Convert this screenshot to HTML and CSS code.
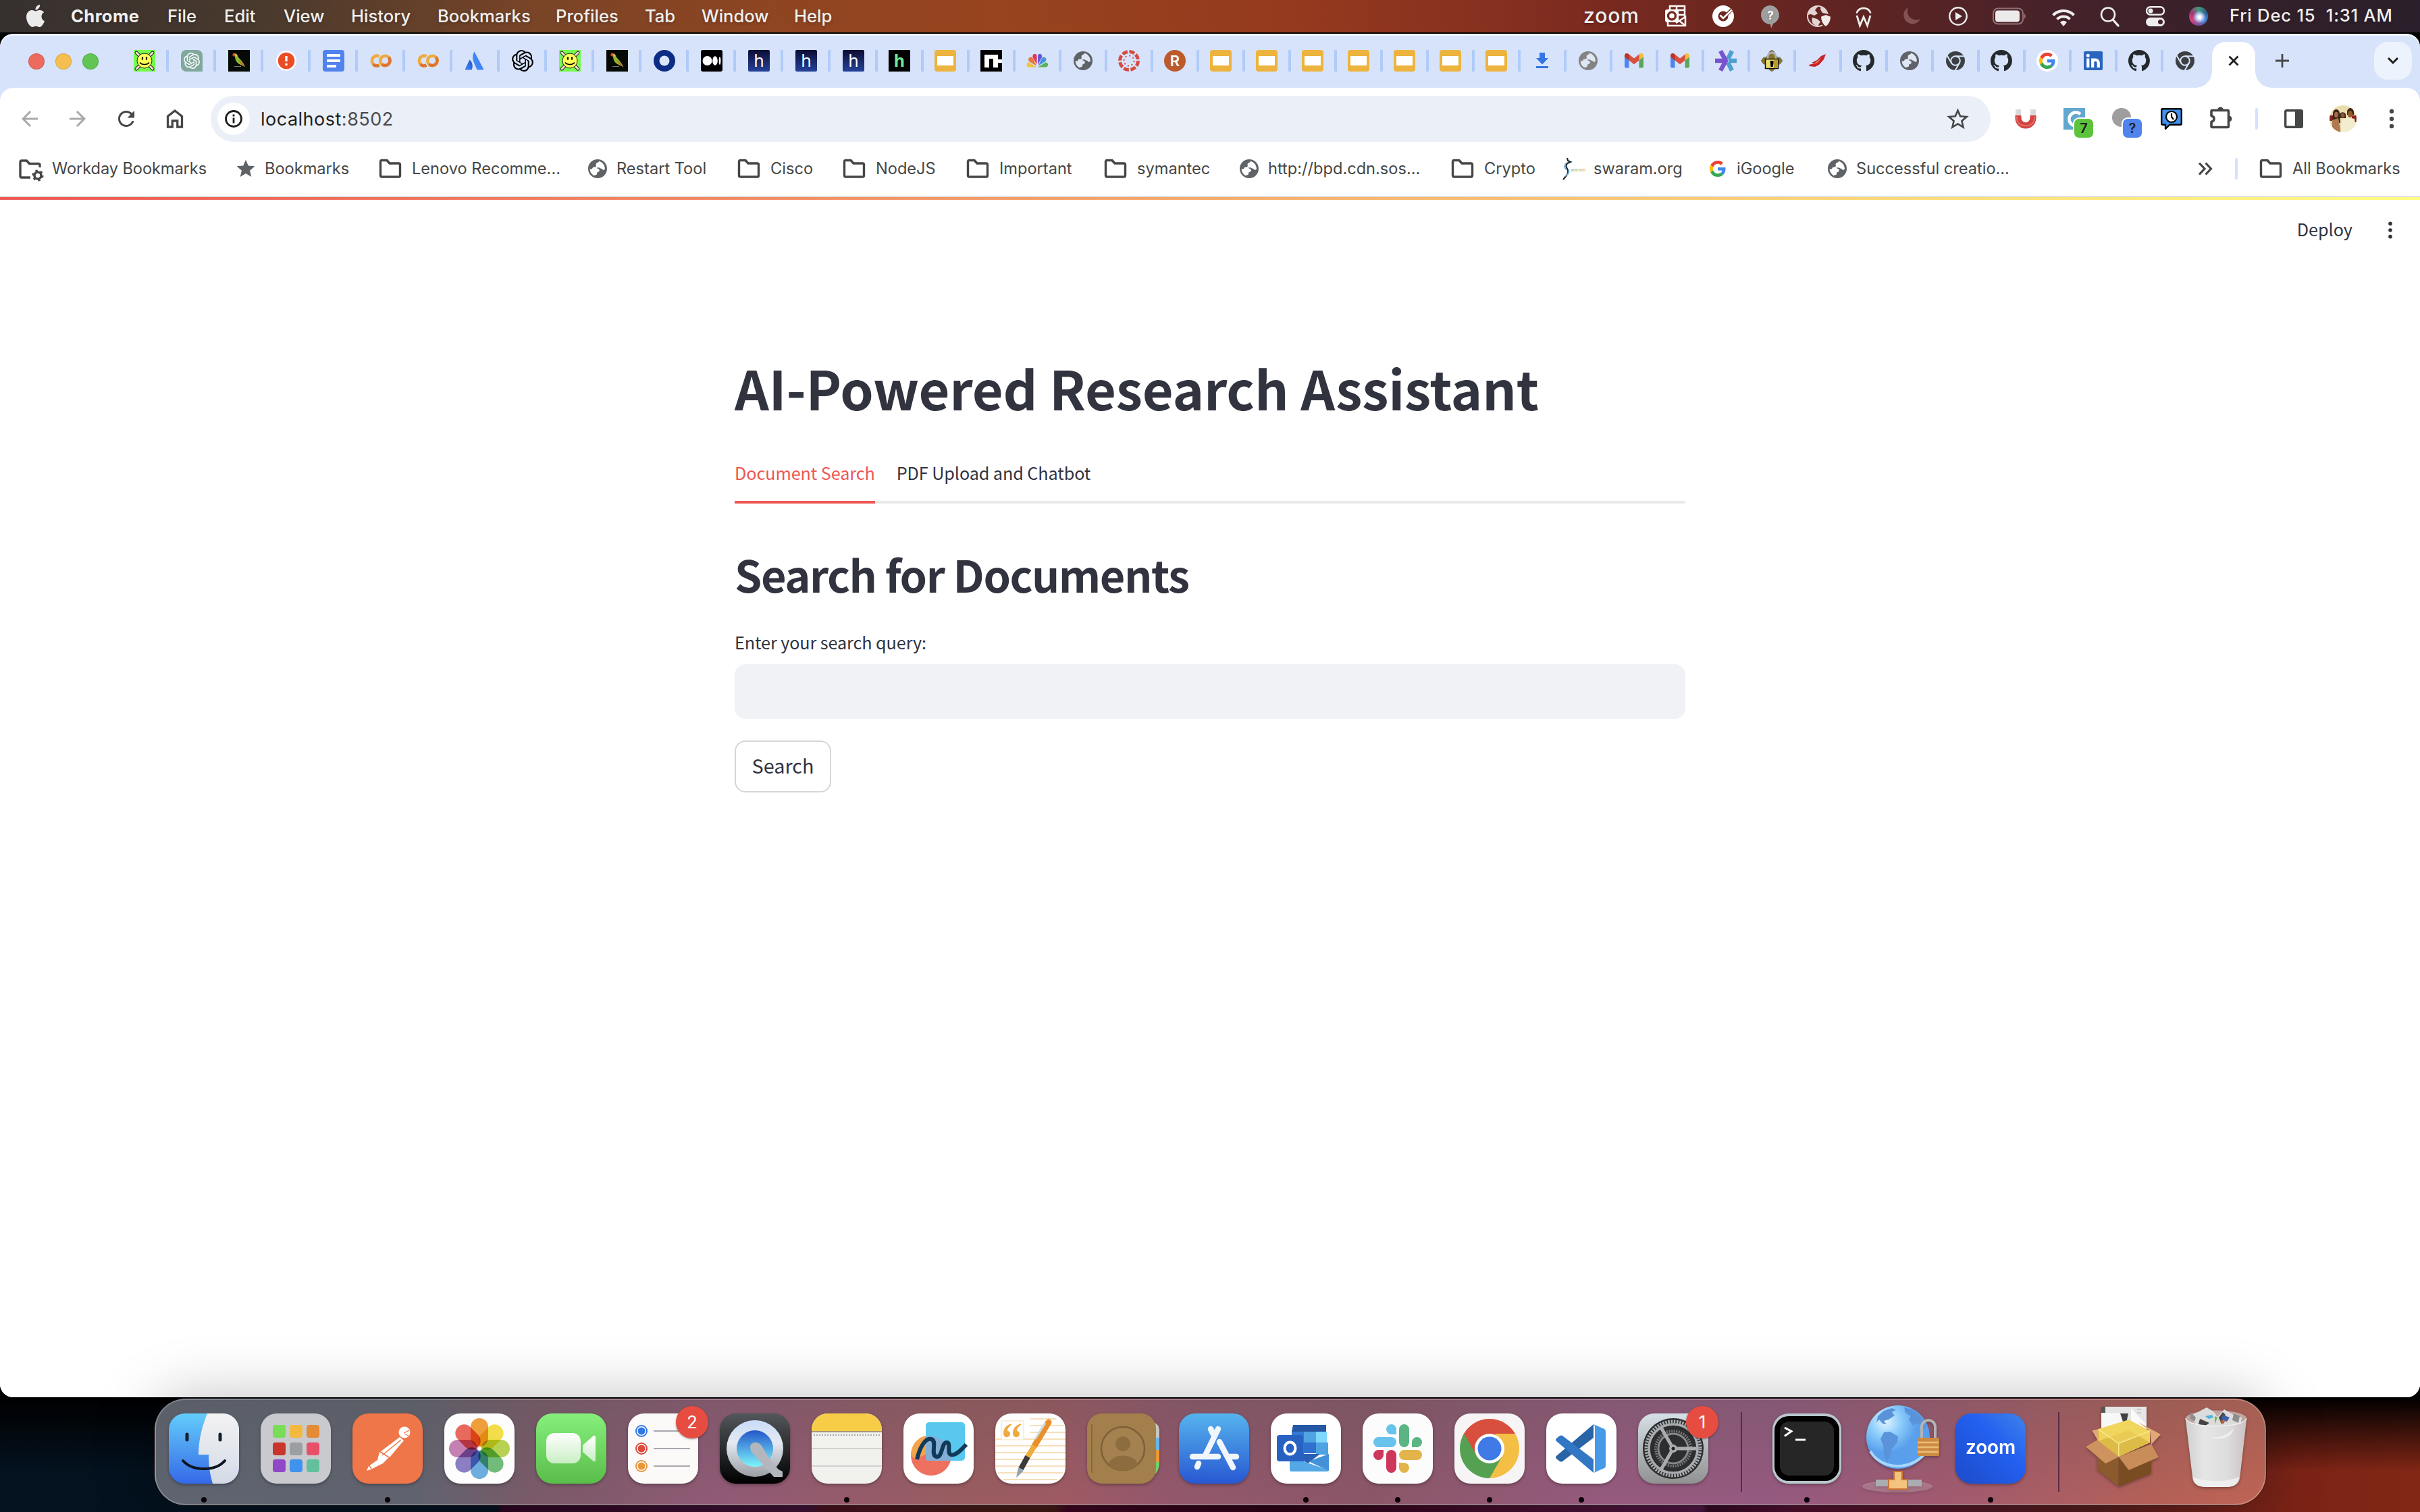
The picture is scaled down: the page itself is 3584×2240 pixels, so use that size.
FILE: index.html
```html
<!DOCTYPE html>
<html lang="en">
<head>
<meta charset="utf-8">
<title>AI-Powered Research Assistant</title>
<link rel="stylesheet" href="styles.css">
</head>
<body>
<svg class="sprite" aria-hidden="true">
  <defs>
    <linearGradient id="g-navy" x1="0" y1="0" x2="0" y2="1"><stop offset="0" stop-color="#0b0d33"/><stop offset="1" stop-color="#25429a"/></linearGradient>
    <linearGradient id="g-atl" x1="1" y1="0" x2="0" y2="1"><stop offset="0" stop-color="#1d57c9"/><stop offset="1" stop-color="#3f86f7"/></linearGradient>
  </defs>
  <symbol id="smiley" viewBox="0 0 32 32"><path fill="#74fb4c" d="M0 0h32v32H0z"/><path d="M4 4l24 24M28 4L4 28" stroke="#222" stroke-width="5" stroke-linecap="round"/><path d="M4 4l24 24M28 4L4 28" stroke="#f3ded0" stroke-width="3" stroke-linecap="round"/><circle cx="16" cy="16" r="11" fill="#ffff54" stroke="#222"/><path d="M13 10.500v4M19 10.500v4" stroke="#000" stroke-width="2.200"/><path d="M9 18.500c3 4 11 4 14 0" stroke="#000" stroke-width="1.600" fill="none"/></symbol>
  <symbol id="openai" viewBox="0 0 24 24"><path fill="currentColor" d="M22.2819 9.8211a5.9847 5.9847 0 0 0-.5157-4.9108 6.0462 6.0462 0 0 0-6.5098-2.9A6.0651 6.0651 0 0 0 4.9807 4.1818a5.9847 5.9847 0 0 0-3.9977 2.9 6.0462 6.0462 0 0 0 .7427 7.0966 5.98 5.98 0 0 0 .511 4.9107 6.051 6.051 0 0 0 6.5146 2.9001A5.9847 5.9847 0 0 0 13.2599 24a6.0557 6.0557 0 0 0 5.7718-4.2058 5.9894 5.9894 0 0 0 3.9977-2.9001 6.0557 6.0557 0 0 0-.7475-7.0729zm-9.022 12.6081a4.4755 4.4755 0 0 1-2.8764-1.0408l.1419-.0804 4.7783-2.7582a.7948.7948 0 0 0 .3927-.6813v-6.7369l2.02 1.1686a.071.071 0 0 1 .038.052v5.5826a4.504 4.504 0 0 1-4.4945 4.4944zm-9.6607-4.1254a4.4708 4.4708 0 0 1-.5346-3.0137l.142.0852 4.783 2.7582a.7712.7712 0 0 0 .7806 0l5.8428-3.3685v2.3324a.0804.0804 0 0 1-.0332.0615L9.74 19.9502a4.4992 4.4992 0 0 1-6.1408-1.6464zM2.3408 7.8956a4.485 4.485 0 0 1 2.3655-1.9728V11.6a.7664.7664 0 0 0 .3879.6765l5.8144 3.3543-2.0201 1.1685a.0757.0757 0 0 1-.071 0l-4.8303-2.7865A4.504 4.504 0 0 1 2.3408 7.872zm16.5963 3.8558L13.1038 8.364 15.1192 7.2a.0757.0757 0 0 1 .071 0l4.8303 2.7913a4.4944 4.4944 0 0 1-.6765 8.1042v-5.6772a.79.79 0 0 0-.407-.667zm2.0107-3.0231l-.142-.0852-4.7735-2.7818a.7759.7759 0 0 0-.7854 0L9.409 9.2297V6.8974a.0662.0662 0 0 1 .0284-.0615l4.8303-2.7866a4.4992 4.4992 0 0 1 6.6802 4.66zM8.3065 12.863l-2.02-1.1638a.0804.0804 0 0 1-.038-.0567V6.0742a4.4992 4.4992 0 0 1 7.3757-3.4537l-.142.0805L8.704 5.459a.7948.7948 0 0 0-.3927.6813zm1.0976-2.3654l2.602-1.4998 2.6069 1.4998v2.9994l-2.5974 1.4997-2.6067-1.4997Z"/></symbol>
  <symbol id="gpt" viewBox="0 0 32 32"><path fill="#80a89c" d="M8 0h16a8 8 0 0 1 8 8v24H8a8 8 0 0 1-8-8V8a8 8 0 0 1 8-8z"/><use href="#openai" x="4" y="4" width="24" height="24" color="#fff"/></symbol>
  <symbol id="parrot" viewBox="0 0 32 32"><path fill="#060a06" d="M0 0h32v32H0z"/><path fill="#8db832" d="M9 5c4 0 5 3 6 6 3 3 8 8 10 14l-2-1c-5-2-10-4-12-9-1-3-1-6-2-10z"/><path fill="#c9622b" d="M15 15c4 2 8 6 9 10l-3-2z"/><circle cx="9" cy="7" r="2.600" fill="#cf4a2c"/><path fill="#e5cf4a" d="M9 6l4 1-1 4z"/><path d="M9 24.500h10" stroke="#777"/></symbol>
  <symbol id="alert" viewBox="0 0 32 32"><circle cx="16" cy="16" r="15" fill="#fff"/><circle cx="16" cy="16" r="12.300" fill="#ea4d25"/><path d="M16 9v8M16 20v3" stroke="#fff" stroke-width="3.400"/></symbol>
  <symbol id="docs" viewBox="0 0 32 32"><rect width="32" height="32" rx="4" fill="#5183ec"/><path d="M6 8h20M6 16h20M6 24h14" stroke="#fff" stroke-width="4"/></symbol>
  <symbol id="colab" viewBox="0 0 32 32"><g fill="none" stroke-width="4.500"><path d="M13.500 9.500a7.300 7.300 0 1 0 0 13" stroke="#efaa3d"/><path d="M4.500 21.200a7.300 7.300 0 0 0 9 1.300" stroke="#dd7430"/><circle cx="22.500" cy="16" r="7.300" stroke="#efaa3d"/><path d="M27.700 10.800a7.300 7.300 0 0 1-10.300 10.300" stroke="#dd7430"/></g></symbol>
  <symbol id="atl" viewBox="0 0 32 32"><path fill="url(#g-atl)" d="M7.500 14.500c5 4 5 11 3 15H2q-1.500 0-1-1.500z"/><path fill="#4285f7" d="M14.500 2.500L28 28q.5 1.500-1 1.500h-8.500C15.500 20 8.500 13 14.500 2.500z"/></symbol>
  <symbol id="ring" viewBox="0 0 32 32"><circle cx="16" cy="16" r="16" fill="#0c2d83"/><circle cx="16" cy="16" r="7.500" fill="#dbe5fb"/></symbol>
  <symbol id="medium" viewBox="0 0 32 32"><rect width="32" height="32" rx="3"/><circle cx="9.500" cy="16" r="7" fill="#fff"/><ellipse cx="21" cy="16" rx="3.800" ry="6.800" fill="#fff"/><ellipse cx="28" cy="16" rx="1.400" ry="6" fill="#fff"/></symbol>
  <symbol id="hnavy" viewBox="0 0 32 32"><rect width="32" height="32" rx="2" fill="url(#g-navy)"/><text class="fav-h" x="16" y="24.500" fill="#fff">h</text></symbol>
  <symbol id="hgreen" viewBox="0 0 32 32"><path d="M0 0h32v32H0z"/><text class="fav-h fav-bold" x="16" y="24.500" fill="#6ee79a">h</text></symbol>
  <symbol id="slides" viewBox="0 0 32 32"><rect width="32" height="32" rx="4" fill="#ecb43e"/><path fill="#fff" d="M4 9h24v14H4z"/></symbol>
  <symbol id="nmark" viewBox="0 0 32 32"><path d="M0 0h32v32H0z"/><path fill="#fff" d="M6 7h20v7h6v5h-6v7h-7V13h-6v13H6z"/></symbol>
  <symbol id="nbc" viewBox="0 0 32 32"><path fill="#efc33f" d="M15.500 25.500H4C-1 25.500-.5 18 4 18.500z"/><path fill="#e9773a" d="M15 23.500L4 17C1 13 6 8 9.500 12z"/><path fill="#dc3b57" d="M15.500 21.500L9.500 11c-1-5 4-7 6-3z"/><path fill="#6e55d8" d="M17 21.500V8c2-4 7-2 6 3z"/><path fill="#4795dd" d="M17.500 23.500L23 12c3.500-4 8.500 1 5.500 5z"/><path fill="#5bb357" d="M17 25.500h11.500c5 0 4.500-7.500 0-7z"/></symbol>
  <symbol id="globe" viewBox="0 0 32 32"><circle cx="16" cy="16" r="14" fill="currentColor"/><path class="globe-land" d="M18.500 4.800c-1 2-3.500 2-4.500 3.500-1.200 1.700.5 3-.5 4.500-1 1.300-3 .4-4.300 1.300-1.200.8-.6 2.400-2.200 2.400H4.600c.2 4.200 2.600 7.800 6.100 9.700 1.400-1 4.300-.4 4.300-2.600 0-1.800.4-2.400 2-2.800 2-.5 2.200-2.500 1.200-4-.9-1.300-3.200-1-3.600-2.300 2.400-.2 3.300-.6 4.500.3 1.500 1.200 3.500.6 4.200 2.200.6 1.300 2.300 1 3.500-.3.500-5-3.100-10.300-8.300-11.900z"/></symbol>
  <symbol id="canvas" viewBox="0 0 32 32"><circle cx="16" cy="16" r="13.500" fill="none" stroke="#d64c40" stroke-width="5" stroke-dasharray="8 2.600"/><circle cx="16" cy="16" r="7.500" fill="none" stroke="#d64c40" stroke-width="2" stroke-dasharray="2 3.890"/></symbol>
  <symbol id="rmark" viewBox="0 0 32 32"><circle cx="16" cy="16" r="16" fill="#bc5a2b"/><text class="fav-r" x="16" y="24" fill="#fff">R</text></symbol>
  <symbol id="dl" viewBox="0 0 32 32"><path fill="#3574e2" d="M12 4h8v8h5l-9 9.500L7 12h5zM7 24h18v3H7z"/></symbol>
  <symbol id="gmail" viewBox="0 0 32 32"><path fill="#4c86ee" d="M2 9h6.500v17.500H4A2 2 0 0 1 2 24.500z"/><path fill="#57a65c" d="M23.500 9H30v15.500a2 2 0 0 1-2 2h-4.500z"/><path fill="#d9503f" d="M8 6l8 6.500L24 6v9l-8 6.300L8 15z"/><path fill="#b6352a" d="M2 8.500C2 5 5.500 4 8.500 6.500v9L2 10.500z"/><path fill="#f2be42" d="M30 8.500C30 5 26.500 4 23.500 6.500v9l6.500-5z"/></symbol>
  <symbol id="aster" viewBox="0 0 32 32"><g stroke-width="6.500" fill="none"><path stroke="#4e9fd0" d="M32 16H20M25 1.500l-6 12M25 30.500l-6-12"/><path stroke="#7a52cf" d="M0 16h16M8 1.500l8 14.500-8 14.500"/></g></symbol>
  <symbol id="lock" viewBox="0 0 32 32"><path fill="#877420" stroke="#777" d="M16 0l4 3v3l5 5h3l4 5-4 5h-3l-5 6v2l-4 3-4-3v-2l-5-6H4l-4-5 4-5h3l5-5V3z"/><path d="M10 14v-4a6 6 0 0 1 12 0v4" stroke="#a9b0bc" stroke-width="3" fill="none"/><path fill="#e8dc6a" stroke="#111" stroke-width="1.500" d="M6.500 13.500h19v14h-19z"/><path fill="#b99b28" d="M19 14.500h6v12h-6z"/><path d="M13.500 16h5v4l-1 5h-3z"/></symbol>
  <symbol id="wing" viewBox="0 0 32 32"><path fill="#c8232c" d="M28 6l-3 8-7 8-6 3-8-1-1-2 8-2-4-1 8-4 6-6z"/><path fill="#e39a4d" d="M22 12l-7 7-5 2 6-5z"/></symbol>
  <symbol id="github" viewBox="0 0 16 16"><path fill="#24292e" d="M8 0C3.580 0 0 3.580 0 8c0 3.540 2.290 6.530 5.470 7.590.4.070.55-.17.55-.38 0-.19-.01-.82-.01-1.490-2.010.37-2.530-.49-2.690-.94-.09-.23-.48-.94-.82-1.130-.28-.15-.68-.52-.01-.53.63-.01 1.080.58 1.230.82.72 1.210 1.870.87 2.330.66.070-.52.280-.87.510-1.070-1.780-.2-3.640-.89-3.640-3.950 0-.87.310-1.590.82-2.150-.08-.2-.36-1.020.08-2.120 0 0 .67-.21 2.200.82.640-.18 1.320-.27 2-.27s1.360.09 2 .27c1.530-1.040 2.200-.82 2.200-.82.440 1.100.160 1.920.08 2.120.510.560.82 1.270.82 2.150 0 3.070-1.870 3.750-3.650 3.950.290.250.540.730.540 1.480 0 1.070-.01 1.930-.01 2.200 0 .210.150.460.550.380A8.010 8.010 0 0 0 16 8c0-4.420-3.580-8-8-8z"/></symbol>
  <symbol id="chromemono" viewBox="0 0 32 32"><circle cx="16" cy="16" r="14" fill="#3c4043"/><g stroke="#d7e3fb" stroke-width="2" fill="none"><circle cx="16" cy="16" r="6.800"/><path d="M16 9.200h13M10.100 19.400L3.600 8.200M21.900 19.400L15.400 30.500"/></g></symbol>
  <symbol id="gicon" viewBox="0 0 48 48"><path fill="#EA4335" d="M24 9.500c3.540 0 6.710 1.220 9.210 3.600l6.850-6.850C35.900 2.380 30.470 0 24 0 14.620 0 6.510 5.380 2.560 13.220l7.980 6.190C12.430 13.720 17.740 9.500 24 9.500z"/><path fill="#4285F4" d="M46.980 24.550c0-1.570-.15-3.090-.38-4.550H24v9.020h12.940c-.58 2.960-2.260 5.480-4.780 7.180l7.730 6c4.510-4.180 7.090-10.360 7.090-17.650z"/><path fill="#FBBC05" d="M10.530 28.590c-.48-1.450-.76-2.990-.76-4.590s.27-3.140.76-4.590l-7.980-6.190C.92 16.460 0 20.120 0 24c0 3.880.92 7.540 2.560 10.780l7.970-6.190z"/><path fill="#34A853" d="M24 48c6.480 0 11.930-2.130 15.890-5.810l-7.730-6c-2.150 1.450-4.920 2.300-8.160 2.300-6.260 0-11.570-4.220-13.470-9.910l-7.980 6.190C6.510 42.620 14.620 48 24 48z"/></symbol>
  <symbol id="gdisc" viewBox="0 0 32 32"><circle cx="16" cy="16" r="16" fill="#fff"/><use href="#gicon" x="4" y="4" width="24" height="24"/></symbol>
  <symbol id="linkedin" viewBox="0 0 32 32"><rect x="2" y="2" width="28" height="28" rx="2" fill="#2b64bd"/><circle cx="8.300" cy="8.300" r="2.500" fill="#fff"/><path stroke="#fff" stroke-width="4.200" fill="none" d="M8.300 12.500V26M15.200 12.500V26M15.200 18.500c0-5 8.600-5.500 8.600 1V26"/></symbol>
  <symbol id="folder" viewBox="0 0 34 32"><path fill="none" stroke="#454746" stroke-width="3.400" stroke-linejoin="round" d="M2.500 5.500q0-2 2-2h7.500l4 4.500h13.500q2 0 2 2v16q0 2-2 2h-25q-2 0-2-2z"/></symbol>
  <symbol id="kebab" viewBox="0 0 8 32"><g fill="currentColor"><circle cx="4" cy="5" r="3.200"/><circle cx="4" cy="16" r="3.200"/><circle cx="4" cy="27" r="3.200"/></g></symbol>
</svg>

<header class="menubar">
  <svg class="apple" viewBox="0 0 24 24"><path fill="#ecebeb" d="M12.152 6.896c-.948 0-2.415-1.078-3.960-1.040-2.040.027-3.910 1.183-4.961 3.014-2.117 3.675-.546 9.103 1.519 12.090 1.013 1.454 2.208 3.090 3.792 3.039 1.520-.065 2.090-.987 3.935-.987 1.831 0 2.350.987 3.960.948 1.637-.026 2.676-1.480 3.676-2.948 1.156-1.688 1.636-3.325 1.662-3.415-.039-.013-3.182-1.221-3.220-4.857-.026-3.040 2.480-4.494 2.597-4.559-1.429-2.090-3.623-2.324-4.390-2.376-2-.156-3.675 1.090-4.610 1.090zM15.530 3.830c.843-1.012 1.400-2.427 1.245-3.830-1.207.052-2.662.805-3.532 1.818-.78.896-1.454 2.338-1.273 3.714 1.338.104 2.715-.688 3.559-1.701"/></svg>
  <nav class="menus"><span class="app-name">Chrome</span><span>File</span><span>Edit</span><span>View</span><span>History</span><span>Bookmarks</span><span>Profiles</span><span>Tab</span><span>Window</span><span>Help</span></nav>
  <div class="status">
    <span class="zoom-word">zoom</span>
    <svg viewBox="0 0 36 36"><g fill="none" stroke="#fff" stroke-width="2.500"><path d="M9 8V3h22v18M19 3v6M20 9h11M6 27v5h26V19l-14 9M22 24l10 8M20 16h10"/></g><rect x="2" y="8" width="20" height="19" rx="3" fill="#fff"/><circle cx="12" cy="17.500" r="5.500" fill="none" stroke="#73291f" stroke-width="3.400"/></svg>
    <svg viewBox="0 0 36 36"><circle cx="18" cy="18" r="16" fill="#fff"/><circle cx="18" cy="18" r="7.500" fill="#6d2820"/><path d="M18 21L33 6" stroke="#6d2820" stroke-width="5" fill="none"/><path d="M13.500 16.500l4.500 4.500L31 8.500" stroke="#fff" stroke-width="2.600" fill="none"/></svg>
    <svg viewBox="0 0 36 36"><path fill="#9f9f9f" d="M18 2a14 14 0 0 1 4 27l-3 7-1-6A14 14 0 0 1 18 2z"/><text class="st-q" x="18" y="23">?</text></svg>
    <svg viewBox="0 0 36 36"><circle cx="17" cy="18" r="15" fill="none" stroke="#e3d3d1" stroke-width="2"/><path fill="#e3d3d1" d="M2 16C4 7 11 2 18 3l-5 6 4 5-5 3-5-2zM22 3c6 2 9 6 10 12l-8-2-3-5zM9 20l7 2 5 4-4 7C10 31 7 27 9 20z"/><path fill="#f1ebea" stroke="#652621" stroke-width="2" d="M29 15l8 3c0 9-3 13-8 16-5-3-8-7-8-16z"/></svg>
    <svg viewBox="0 0 36 36"><path d="M8 12.500c3.500-8.500 16.500-8.500 20 0" stroke="#eee" stroke-width="2.600" stroke-linecap="round" fill="none"/><path d="M8 17l4.500 15L18 19l5.500 13L28 17" stroke="#eee" stroke-width="2.800" fill="none"/></svg>
    <svg viewBox="0 0 36 36"><path fill="#835353" d="M14 5a13 13 0 1 0 18 17A13 13 0 0 1 14 5z"/></svg>
    <svg viewBox="0 0 36 36"><circle cx="18" cy="18" r="12.700" fill="none" stroke="#eee" stroke-width="2.400"/><path fill="#eee" d="M14 12l10 6-10 6z"/></svg>
    <svg class="battery" viewBox="0 0 52 36"><rect x="2" y="6.500" width="44" height="23" rx="7" fill="none" stroke="#8f7273" stroke-width="2"/><rect x="5" y="9.500" width="36" height="17" rx="4" fill="#eceaea"/><path fill="#8f7273" d="M48 14q4 4 0 8z"/></svg>
    <svg viewBox="0 0 36 36"><g fill="none" stroke="#eee" stroke-width="4"><path d="M2.500 16.500a22 22 0 0 1 31 0"/><path d="M8.500 22.500a13.500 13.500 0 0 1 19 0"/></g><path fill="#eee" d="M13 27q5-4.500 10 0l-5 6z"/></svg>
    <svg viewBox="0 0 36 36"><circle cx="16" cy="15.500" r="10" fill="none" stroke="#eee" stroke-width="2.600"/><path d="M23.500 23.500L31 32" stroke="#eee" stroke-width="3.400" stroke-linecap="round"/></svg>
    <svg viewBox="0 0 36 36"><rect x="5" y="4.200" width="26" height="11.500" rx="5.700" fill="none" stroke="#eee" stroke-width="2.400"/><circle cx="11" cy="10" r="3.500" fill="#eee"/><rect x="4" y="20" width="28" height="13" rx="6.500" fill="#eee"/><circle cx="25.500" cy="26.500" r="3.500" fill="#43222a"/></svg>
    <span class="siri"></span>
    <span class="clock">Fri Dec 15&nbsp; 1:31 AM</span>
  </div>
</header>

<section class="window">
  <div class="tabstrip">
    <div class="lights"><i class="close"></i><i class="min"></i><i class="max"></i></div>
    <div class="tabs">
      <span class="tab"><svg><use href="#smiley"/></svg></span>
      <span class="tab"><svg><use href="#gpt"/></svg></span>
      <span class="tab"><svg><use href="#parrot"/></svg></span>
      <span class="tab"><svg><use href="#alert"/></svg></span>
      <span class="tab"><svg><use href="#docs"/></svg></span>
      <span class="tab"><svg><use href="#colab"/></svg></span>
      <span class="tab"><svg><use href="#colab"/></svg></span>
      <span class="tab"><svg><use href="#atl"/></svg></span>
      <span class="tab"><svg><use href="#openai"/></svg></span>
      <span class="tab"><svg><use href="#smiley"/></svg></span>
      <span class="tab"><svg><use href="#parrot"/></svg></span>
      <span class="tab"><svg><use href="#ring"/></svg></span>
      <span class="tab"><svg><use href="#medium"/></svg></span>
      <span class="tab"><svg><use href="#hnavy"/></svg></span>
      <span class="tab"><svg><use href="#hnavy"/></svg></span>
      <span class="tab"><svg><use href="#hnavy"/></svg></span>
      <span class="tab narrow"><svg><use href="#hgreen"/></svg></span>
      <span class="tab narrow"><svg><use href="#slides"/></svg></span>
      <span class="tab narrow"><svg><use href="#nmark"/></svg></span>
      <span class="tab narrow"><svg><use href="#nbc"/></svg></span>
      <span class="tab narrow"><svg class="globe"><use href="#globe"/></svg></span>
      <span class="tab narrow"><svg><use href="#canvas"/></svg></span>
      <span class="tab narrow"><svg><use href="#rmark"/></svg></span>
      <span class="tab narrow"><svg><use href="#slides"/></svg></span>
      <span class="tab narrow"><svg><use href="#slides"/></svg></span>
      <span class="tab narrow"><svg><use href="#slides"/></svg></span>
      <span class="tab narrow"><svg><use href="#slides"/></svg></span>
      <span class="tab narrow"><svg><use href="#slides"/></svg></span>
      <span class="tab narrow"><svg><use href="#slides"/></svg></span>
      <span class="tab narrow"><svg><use href="#slides"/></svg></span>
      <span class="tab narrow"><svg><use href="#dl"/></svg></span>
      <span class="tab narrow"><svg class="globe pale"><use href="#globe"/></svg></span>
      <span class="tab narrow"><svg><use href="#gmail"/></svg></span>
      <span class="tab narrow"><svg><use href="#gmail"/></svg></span>
      <span class="tab narrow"><svg><use href="#aster"/></svg></span>
      <span class="tab narrow"><svg><use href="#lock"/></svg></span>
      <span class="tab narrow"><svg><use href="#wing"/></svg></span>
      <span class="tab narrow"><svg><use href="#github"/></svg></span>
      <span class="tab narrow"><svg class="globe"><use href="#globe"/></svg></span>
      <span class="tab narrow"><svg><use href="#chromemono"/></svg></span>
      <span class="tab narrow"><svg><use href="#github"/></svg></span>
      <span class="tab narrow"><svg><use href="#gdisc"/></svg></span>
      <span class="tab narrow"><svg><use href="#linkedin"/></svg></span>
      <span class="tab narrow"><svg><use href="#github"/></svg></span>
      <span class="tab narrow last"><svg><use href="#chromemono"/></svg></span>
      <span class="tab-active"><svg viewBox="0 0 16 16"><path d="M1.500 1.500l13 13M14.500 1.500l-13 13" stroke="#1f1f1f" stroke-width="2.800"/></svg></span>
      <svg class="new-tab" viewBox="0 0 20 20"><path d="M10 0v20M0 10h20" stroke="#454746" stroke-width="2.800"/></svg>
      <span class="tab-search"><svg viewBox="0 0 16 10"><path d="M1 1l7 7 7-7" fill="none" stroke="#1f1f1f" stroke-width="3"/></svg></span>
    </div>
  </div>

  <div class="chrome-body">
    <div class="toolbar">
      <div class="nav-icons">
        <svg class="dim" viewBox="0 0 24 24"><path d="M20 11H7.830l5.590-5.590L12 4l-8 8 8 8 1.410-1.410L7.830 13H20v-2z"/></svg>
        <svg class="dim flip" viewBox="0 0 24 24"><path d="M20 11H7.830l5.590-5.590L12 4l-8 8 8 8 1.410-1.410L7.830 13H20v-2z"/></svg>
        <svg viewBox="0 0 24 24"><path d="M17.650 6.350C16.200 4.900 14.210 4 12 4c-4.420 0-7.990 3.580-7.990 8s3.570 8 7.990 8c3.730 0 6.840-2.550 7.730-6h-2.080c-.82 2.330-3.040 4-5.650 4-3.310 0-6-2.690-6-6s2.690-6 6-6c1.660 0 3.140.69 4.220 1.780L13 11h7V4l-2.350 2.350z"/></svg>
        <svg viewBox="0 0 24 24"><path class="line" d="M5 9.500V20h4.500v-6h5v6H19V9.500L12 4z"/></svg>
      </div>
      <div class="omnibox">
        <span class="site-info"><svg viewBox="0 0 28 28"><circle cx="14" cy="14" r="11.500" fill="none" stroke="#1f1f1f" stroke-width="2.800"/><path d="M14 12.500v8M14 7.500v3" stroke="#1f1f1f" stroke-width="2.800"/></svg></span>
        <span class="url">localhost<em>:8502</em></span>
        <svg class="fav-star" viewBox="0 0 24 24"><path fill="#454746" d="M22 9.240l-7.190-.62L12 2 9.190 8.630 2 9.240l5.460 4.730L5.820 21 12 17.270 18.180 21l-1.630-7.030L22 9.240zM12 15.400l-3.760 2.270 1-4.280-3.320-2.880 4.380-.38L12 6.100l1.710 4.040 4.380.38-3.320 2.880 1 4.280L12 15.400z"/></svg>
      </div>
      <div class="extensions">
        <svg viewBox="0 0 32 32"><path d="M5 2v12a11 11 0 0 0 22 0V2" fill="none" stroke="#d9d9d9" stroke-width="8"/><path d="M5 11v4a11 11 0 0 0 22 0v-4" fill="none" stroke="#d44340" stroke-width="9"/><path d="M3 13v3c1 14 25 14 26 0v-3" fill="none" stroke="#e26e6a" stroke-width="2"/></svg>
        <span class="ext"><svg viewBox="0 0 32 32"><path fill="#62a7cf" d="M0 0h32v32H0z"/><path d="M25 9a10 10 0 1 0 0 15" fill="none" stroke="#fff" stroke-width="4.500"/></svg><b class="green">7</b></span>
        <span class="ext"><svg viewBox="0 0 32 32"><circle cx="14" cy="14" r="14" fill="#9e9e9e"/></svg><b class="blue">?</b></span>
        <svg viewBox="0 0 32 32"><path fill="#4190ee" stroke="#000" stroke-width="2.400" stroke-linejoin="round" d="M3 1.200h26q1.800 0 1.800 1.800v20q0 1.800-1.800 1.800H13L7 31v-6.200H3Q1.200 24.800 1.200 23V3Q1.200 1.200 3 1.200z"/><circle cx="16" cy="13" r="8" fill="#fff" stroke="#000" stroke-width="2.200"/><path d="M16 8v5l3 4" fill="none" stroke="#000" stroke-width="2.200"/></svg>
        <svg class="puzzle" viewBox="0 0 36 36"><path fill="none" stroke="#454746" stroke-width="3.600" stroke-linejoin="round" d="M4 8q0-1.500 1.500-1.500H28q1.500 0 1.500 1.500v22q0 1.500-1.500 1.500H5.500Q4 31.500 4 30v-6.500q4-1 4-4.500t-4-4.500z"/><path fill="#454746" d="M13 6a4.500 4.500 0 0 1 9 0zM30 14.500a4.500 4.500 0 0 1 0 9z"/></svg>
        <i class="rule"></i>
        <svg class="side" viewBox="0 0 30 30"><rect x="2.700" y="2.700" width="24.600" height="24.600" rx="1.500" fill="none" stroke="#454746" stroke-width="3.400"/><path fill="#454746" d="M17 2h11v26H17z"/></svg>
        <svg class="avatar" viewBox="0 0 40 40"><clipPath id="av"><circle cx="20" cy="20" r="20"/></clipPath><g clip-path="url(#av)"><path fill="#e9dcae" d="M0 0h40v40H0z"/><path fill="#8a2320" d="M0 15h14v8H0zM33 15h7v10h-7z"/><path fill="#3b2416" d="M5 12a5 6 0 0 1 10 0l1 14H4zM15 13a5 5 0 0 1 9 0v6h-9zM26 10a5 6 0 0 1 10 0v4H26z"/><ellipse cx="10" cy="14" rx="3" ry="4.300" fill="#a36a48"/><ellipse cx="19.500" cy="15" rx="3" ry="3.600" fill="#8c5535"/><ellipse cx="30.500" cy="13" rx="3.600" ry="5" fill="#93592f"/><path fill="#b07a50" d="M4 22l9-3 4 21H3z"/><path fill="#f3edcf" d="M18 22l9-4 10 2 3 20H16z"/></g></svg>
        <svg class="kebab"><use href="#kebab"/></svg>
      </div>
    </div>

    <div class="bookmarks">
      <span><svg viewBox="0 0 40 36"><path fill="none" stroke="#454746" stroke-width="3.400" stroke-linejoin="round" d="M18 29H5q-2 0-2-2V6q0-2 2-2h7.500l4 4.500H30q2 0 2 2V14"/><circle cx="29" cy="26" r="5" fill="none" stroke="#454746" stroke-width="3.600"/><circle cx="29" cy="26" r="7.300" fill="none" stroke="#454746" stroke-width="2.600" stroke-dasharray="3.400 4.240"/></svg>Workday Bookmarks</span>
      <span><svg viewBox="0 0 24 24"><path fill="#5f6368" d="M12 17.270L18.180 21l-1.640-7.030L22 9.240l-7.190-.61L12 2 9.190 8.630 2 9.240l5.460 4.730L5.820 21z"/></svg>Bookmarks</span>
      <span><svg class="f"><use href="#folder"/></svg>Lenovo Recomme...</span>
      <span><svg class="globe on-white"><use href="#globe"/></svg>Restart Tool</span>
      <span><svg class="f"><use href="#folder"/></svg>Cisco</span>
      <span><svg class="f"><use href="#folder"/></svg>NodeJS</span>
      <span><svg class="f"><use href="#folder"/></svg>Important</span>
      <span><svg class="f"><use href="#folder"/></svg>symantec</span>
      <span><svg class="globe on-white"><use href="#globe"/></svg>http://bpd.cdn.sos...</span>
      <span><svg class="f"><use href="#folder"/></svg>Crypto</span>
      <span class="swaram"><svg viewBox="0 0 32 32"><path d="M7 0l1 4 4 2-5 2q-3 4 0 8t-1 10l-5 6" fill="none" stroke="#1a2a33" stroke-width="2.200"/><path d="M5 8q-4 6 1 9M9 18q2 5-5 9" fill="none" stroke="#6fa8d6" stroke-width="1.800"/><text class="sw" x="12" y="20"><tspan fill="#9cc4e4">w</tspan><tspan fill="#c9cf9a">ar</tspan><tspan fill="#e3c27c">am</tspan></text></svg>swaram.org</span>
      <span><svg class="g"><use href="#gicon"/></svg>iGoogle</span>
      <span><svg class="globe on-white"><use href="#globe"/></svg>Successful creatio...</span>
      <span class="more"><svg viewBox="0 0 22 20"><path d="M2 1.500l8 8.500-8 8.500M11.500 1.500l8 8.500-8 8.500" fill="none" stroke="#454746" stroke-width="3.200"/></svg></span>
      <i class="rule"></i>
      <span><svg class="f"><use href="#folder"/></svg>All Bookmarks</span>
    </div>

    <div class="page">
      <div class="decoration"></div>
      <div class="app-bar"><span>Deploy</span><svg class="kebab"><use href="#kebab"/></svg></div>
      <main>
        <h1>AI-Powered Research Assistant</h1>
        <div class="st-tabs"><span class="selected">Document Search</span><span>PDF Upload and Chatbot</span></div>
        <h2>Search for Documents</h2>
        <label for="q">Enter your search query:</label>
        <input id="q" type="text">
        <button type="button">Search</button>
      </main>
    </div>
  </div>
</section>

<footer class="dock">
  <span class="run"><svg viewBox="0 0 104 104"><defs><linearGradient id="fa" x1="0" y1="0" x2="0" y2="1"><stop offset="0" stop-color="#63cdfa"/><stop offset="1" stop-color="#3569e8"/></linearGradient><linearGradient id="fb" x1="0" y1="0" x2="0" y2="1"><stop offset="0" stop-color="#f3f2f3"/><stop offset="1" stop-color="#d3dae6"/></linearGradient><clipPath id="tile"><rect width="104" height="104" rx="24"/></clipPath></defs><g clip-path="url(#tile)"><path fill="url(#fa)" d="M0 0h104v104H0z"/><path fill="url(#fb)" d="M57 0C49 20 44 40 44 61h15c0 16 2 30 6 43h39V0z"/></g><path d="M27 31v8M76 31v8" stroke="#16202b" stroke-width="5" stroke-linecap="round"/><path d="M21 70c14 16 48 16 62 0" fill="none" stroke="#0c1420" stroke-width="4" stroke-linecap="round"/></svg></span>
  <span><svg viewBox="0 0 104 104"><rect width="104" height="104" rx="24" fill="#c9cacd"/><g><rect x="18" y="17" width="19" height="19" rx="4" fill="#79dd57"/><rect x="43" y="17" width="19" height="19" rx="4" fill="#f3b93f"/><rect x="68" y="17" width="19" height="19" rx="4" fill="#e58a35"/><rect x="18" y="43" width="19" height="19" rx="4" fill="#c9352a"/><rect x="43" y="43" width="19" height="19" rx="4" fill="#9b9fa2"/><rect x="68" y="43" width="19" height="19" rx="4" fill="#e8506a"/><rect x="18" y="68" width="19" height="19" rx="4" fill="#9048c8"/><rect x="43" y="68" width="19" height="19" rx="4" fill="#3f92ee"/><rect x="68" y="68" width="19" height="19" rx="4" fill="#62c19c"/></g></svg></span>
  <span class="run"><svg viewBox="0 0 104 104"><rect width="104" height="104" rx="24" fill="#ef7648"/><circle cx="77" cy="28" r="8.500" fill="#fff"/><path d="M76 29l8-4M77 30l6 3" stroke="#ef7648" stroke-width="1.300"/><path fill="#fff" d="M70 35l6 5-21 25-14-8z"/><path fill="#fff" d="M40 57l14 8-9 9-18 9-6 2 3-7 13-9z"/><path d="M72 39L44 62M40 56l14 9M24 76l4 6" stroke="#ef7648" stroke-width="1.500"/></svg></span>
  <span><svg viewBox="0 0 104 104"><rect width="104" height="104" rx="24" fill="#fdfdfd"/><g class="petals" transform="translate(52 52)"><rect x="-13" y="-45" width="26" height="42" rx="13" fill="#f0a03c"/><rect x="-13" y="-45" width="26" height="42" rx="13" fill="#f4e04a" transform="rotate(45)"/><rect x="-13" y="-45" width="26" height="42" rx="13" fill="#b9d452" transform="rotate(90)"/><rect x="-13" y="-45" width="26" height="42" rx="13" fill="#72bd7c" transform="rotate(135)"/><rect x="-13" y="-45" width="26" height="42" rx="13" fill="#6fb0e0" transform="rotate(180)"/><rect x="-13" y="-45" width="26" height="42" rx="13" fill="#8c7fc4" transform="rotate(225)"/><rect x="-13" y="-45" width="26" height="42" rx="13" fill="#c681b4" transform="rotate(270)"/><rect x="-13" y="-45" width="26" height="42" rx="13" fill="#ea6a5e" transform="rotate(315)"/></g></svg></span>
  <span><svg viewBox="0 0 104 104"><defs><linearGradient id="ft" x1="0" y1="0" x2="0" y2="1"><stop offset="0" stop-color="#86ef7c"/><stop offset="1" stop-color="#59bd49"/></linearGradient><linearGradient id="fw" x1="0" y1="0" x2="0" y2="1"><stop offset="0" stop-color="#fff"/><stop offset="1" stop-color="#c9eec4"/></linearGradient></defs><rect width="104" height="104" rx="24" fill="url(#ft)"/><rect x="15" y="29" width="51" height="45" rx="12" fill="url(#fw)"/><path fill="url(#fw)" d="M69 47l16-14q3-1 3 2v34q0 3-3 2L69 57z"/></svg></span>
  <span><svg viewBox="0 0 104 104"><rect width="104" height="104" rx="24" fill="#fbfaf9"/><g stroke="#a9a9ac" stroke-width="2"><path d="M38 26h54M38 52h54M38 78h54"/></g><g stroke-width="2" fill="#fff"><circle cx="20" cy="26" r="8" stroke="#2f78e6"/><circle cx="20" cy="52" r="8" stroke="#de4a3c"/><circle cx="20" cy="78" r="8" stroke="#e8963a"/></g><circle cx="20" cy="26" r="5.500" fill="#2f78e6"/><circle cx="20" cy="52" r="5.500" fill="#de4a3c"/><circle cx="20" cy="78" r="5.500" fill="#e8963a"/></svg><b class="badge">2</b></span>
  <span><svg viewBox="0 0 104 104"><defs><linearGradient id="qa" x1="0" y1="0" x2="0" y2="1"><stop offset="0" stop-color="#53575b"/><stop offset="1" stop-color="#000"/></linearGradient><linearGradient id="qb" x1="0" y1="0" x2="0" y2="1"><stop offset="0" stop-color="#c9dcf8"/><stop offset=".4" stop-color="#e4e9f2"/><stop offset="1" stop-color="#9a9da3"/></linearGradient><linearGradient id="qc" x1="0" y1="0" x2="0" y2="1"><stop offset="0" stop-color="#2457c9"/><stop offset="1" stop-color="#7df5fb"/></linearGradient></defs><rect width="104" height="104" rx="24" fill="url(#qa)"/><circle cx="52" cy="52" r="42" fill="url(#qb)"/><circle cx="52" cy="52" r="27" fill="url(#qc)"/><path fill="#b3b6bd" d="M45 50c0-8 12-10 17-2l14 23 11 12 6 3v8H80L46 56z"/></svg></span>
  <span class="run"><svg viewBox="0 0 104 104"><g clip-path="url(#tile)"><path fill="#f1f1ee" d="M0 0h104v104H0z"/><path fill="#f7cd48" d="M0 0h104v26H0z"/></g><path d="M0 27h104" stroke="#a59a78" stroke-width="2"/><path d="M3 32h98" stroke="#aaa" stroke-width="2" stroke-dasharray="2 2"/><path d="M0 52h104M0 78h104" stroke="#d2d2d2" stroke-width="2"/></svg></span>
  <span><svg viewBox="0 0 104 104"><rect width="104" height="104" rx="24" fill="#fff"/><ellipse cx="41" cy="62" rx="30" ry="30" fill="#ee7160"/><path fill="#f2a44a" d="M11 62c0-18 14-30 29-30l10 20-32 16z"/><rect x="33" y="13" width="58" height="57" rx="5" fill="#58c8ee"/><path fill="#8fa9cf" opacity=".8" d="M33 34c22-4 38 14 38 36H36q-3 0-3-3z"/><path d="M20 68c4-17 12-32 21-30 10 2-2 24 8 26 9 2 7-21 15-21 7 0 0 16 6 18 6 2 13-4 23-15" fill="none" stroke="#12395a" stroke-width="6"/></svg></span>
  <span><svg viewBox="0 0 104 104"><rect width="104" height="104" rx="24" fill="#fff"/><path d="M52 8h38M52 18h50M52 28h52M1 48h103M0 58h104M0 68h104M0 78h104M4 88h96M12 98h80M1 38h103" stroke="#f7dfbb" stroke-width="2"/><path fill="#fff" stroke="#f6dcb6" d="M9 11h33v28H9z"/><path fill="#efa93f" d="M24 15c-8 2-12 8-12 14 0 4 2 6 5 6s5-2 5-5-2-4-4-4c0-4 3-7 6-9zM38 15c-8 2-12 8-12 14 0 4 2 6 5 6s5-2 5-5-2-4-4-4c0-4 3-7 6-9z"/><path d="M79 13L58 48" stroke="#e88f2b" stroke-width="9" stroke-linecap="round"/><path d="M74 14L59 38" stroke="#cfd9e4" stroke-width="3"/><path d="M58 48L47 66" stroke="#eeae3f" stroke-width="8"/><path d="M48 64L38 82" stroke="#3a3a3c" stroke-width="8"/><path fill="#8fa1ad" d="M34 80l8 5-11 10z"/></svg></span>
  <span><svg viewBox="0 0 104 104"><path fill="#c8c6bd" d="M90 14h10q6 2 7 10v14H90z"/><path fill="#64b8ec" d="M90 36h17v18H90z"/><path fill="#ee9736" d="M90 54h17v18H90z"/><path fill="#71d567" d="M90 72h17q0 14-8 19h-9z"/><rect width="102" height="104" rx="22" fill="#a37f4c"/><path d="M7 16v72" stroke="#8a6a3c" stroke-width="2"/><circle cx="53" cy="52" r="32" fill="#a58150" stroke="#7d6038" stroke-width="2.500"/><circle cx="53" cy="45" r="11" fill="#8d6d40"/><path fill="#8d6d40" d="M32 76c2-18 40-18 43 0-12 12-32 12-43 0z"/></svg></span>
  <span><svg viewBox="0 0 104 104"><defs><linearGradient id="as" x1="0" y1="0" x2="0" y2="1"><stop offset="0" stop-color="#55b4ee"/><stop offset="1" stop-color="#2857d2"/></linearGradient></defs><rect width="104" height="104" rx="24" fill="url(#as)"/><g stroke="#f1f6fd" stroke-width="8.500" stroke-linecap="round"><path d="M47 23l4 8M58 23L38 64M60 42l20 38M27 79l2-5M20 64h38M73 64h12"/></g></svg></span>
  <span class="run"><svg viewBox="0 0 104 104"><rect width="104" height="104" rx="24" fill="#fff"/><path fill="#2657a5" d="M33 17h49v10H31z"/><path fill="#3478d1" d="M31 27h18v45H31z"/><path fill="#4fa3e3" d="M49 27h18v16H49zM67 43h18v18H67z"/><path fill="#7fd7fb" d="M67 27h16v16H67z"/><path fill="#2f72cd" d="M49 43h18v16H49z"/><path fill="#2a5fb6" d="M31 60h42L55 74z"/><path fill="#55a8e6" d="M28 64l58 20v-1q0 3-3 3H31q-3 0-3-3z"/><path fill="#4391d8" d="M86 60v25L56 71z"/><rect x="9" y="32" width="39" height="39" rx="4" fill="#2762c3"/><ellipse cx="28.500" cy="51.500" rx="8" ry="9" fill="none" stroke="#fff" stroke-width="4"/></svg></span>
  <span class="run"><svg viewBox="0 0 104 104"><rect width="104" height="104" rx="24" fill="#fdfcfd"/><g fill="#67c3ec"><rect x="16" y="35" width="34" height="15" rx="7.500"/><path d="M50 31h-7.500A7.500 7.500 0 1 1 50 23.500z"/></g><g fill="#5bb483"><rect x="54" y="16" width="15" height="34" rx="7.500"/><path d="M73 50v-7.500A7.500 7.500 0 1 1 80.500 50z"/></g><g fill="#e2b44b"><rect x="54" y="54" width="34" height="15" rx="7.500"/><path d="M54 73h7.500A7.500 7.500 0 1 1 54 80.500z"/></g><g fill="#cd375b"><rect x="35" y="54" width="15" height="34" rx="7.500"/><path d="M31 54v7.500A7.500 7.500 0 1 1 23.500 54z"/></g></svg></span>
  <span class="run"><svg viewBox="0 0 104 104"><rect width="104" height="104" rx="24" fill="#f7f4f5"/><path fill="#d84f3e" d="M52 52L13.900 30A44 44 0 0 1 90.100 30z"/><path fill="#f3bf45" d="M52 52L90.100 30A44 44 0 0 1 52 96z"/><path fill="#54a152" d="M52 52v44A44 44 0 0 1 13.900 30z"/><path fill="#d84f3e" d="M52 30h38L52 45zM33 63L14 30l20 5z"/><path fill="#f3bf45" d="M71 63L52 96l8-30zM60 30h30l-18 25z"/><path fill="#54a152" d="M33 63L14 30v28zM52 96l19-33H35z"/><circle cx="52" cy="52" r="22" fill="#fff"/><circle cx="52" cy="52" r="17.500" fill="#3f7ae6"/></svg></span>
  <span class="run"><svg viewBox="0 0 104 104"><rect width="104" height="104" rx="24" fill="#fff"/><path fill="#2864a6" d="M70 16L15 63q-2 2 0 4l5 4q2 1 4 0l46-35z"/><path fill="#3277c4" d="M70 88L15 41q-2-2 0-4l5-4q2-1 4 0l46 35z"/><path fill="#469ae8" d="M70 16l16 7q2 1 2 4v50q0 3-2 4l-16 7q2-1 2-4V20q0-3-2-4z"/></svg></span>
  <span><svg viewBox="0 0 104 104"><defs><linearGradient id="ss" x1="0" y1="0" x2="0" y2="1"><stop offset="0" stop-color="#d5e0e6"/><stop offset="1" stop-color="#919191"/></linearGradient></defs><rect width="104" height="104" rx="24" fill="url(#ss)"/><circle cx="52" cy="52" r="45" fill="#2c2e30"/><g fill="none" stroke="#a9adb0"><circle cx="52" cy="52" r="40" stroke-width="5" stroke-dasharray="2.500 1.700"/><circle cx="52" cy="52" r="36" stroke-width="3.500"/><circle cx="52" cy="52" r="26" stroke-width="4" stroke="#777" stroke-dasharray="2 1.600"/><circle cx="52" cy="52" r="22" stroke-width="3" stroke="#888"/><path d="M52 52h35M52 52L34 21M52 52L34 83" stroke-width="5"/></g><circle cx="52" cy="52" r="6" fill="#a9adb0"/><circle cx="52" cy="52" r="2.500" fill="#222"/></svg><b class="badge">1</b></span>
  <i class="divider"></i>
  <span class="run"><svg viewBox="0 0 104 104"><rect x="1" width="102" height="104" rx="24" fill="#b9c6cc"/><rect x="4" y="4" width="96" height="96" rx="21" fill="#000"/><rect x="12" y="12" width="80" height="80" rx="14" fill="#262626"/><path d="M19 21l10 5.500-10 7" fill="none" stroke="#fff" stroke-width="3"/><path d="M35 39h15" stroke="#fff" stroke-width="3"/></svg></span>
  <span><svg viewBox="0 0 104 104"><defs><radialGradient id="wg" cx=".3" cy=".25"><stop offset="0" stop-color="#e3f5ff"/><stop offset=".5" stop-color="#8accfb"/><stop offset="1" stop-color="#5a9fec"/></radialGradient></defs><ellipse cx="50" cy="108" rx="52" ry="9" fill="#d9b9c4" opacity=".35"/><circle cx="51" cy="35" r="47" fill="url(#wg)"/><g fill="#5a93da"><path d="M30-4l12-4 6 3-6 3 4 5-9 6-7 2 4 5-6-1-5-6-4 4 2-9z"/><path d="M30 28l9-1 12 7-1 9-8 9-3 12-5 8-4-13-1-12-4-9z"/><path d="M60-9l14 4 12 12 8 12-6 5-4-8-6-2-5 4-6-9 3-5-8-5z"/></g><path d="M10 56c16 28 60 30 82 2" stroke="#a8d6fb" stroke-width="4" fill="none"/><path fill="#aaadb1" d="M18 98h68v10H18z"/><path fill="#f3c47e" stroke="#cc7434" stroke-width="2" d="M45 86h12v12h8v14H37V98h8z"/><path d="M86 37V20a10 10 0 0 1 20 0v17" stroke="#b4b4b4" stroke-width="4" fill="none"/><rect x="79" y="36" width="33" height="27" rx="2" fill="#cb8b43"/><path d="M80 43h31M80 50h31M80 57h31" stroke="#edbd77" stroke-width="2.500"/></svg></span>
  <span class="run"><svg viewBox="0 0 104 104"><defs><linearGradient id="zm" x1="1" y1="0" x2="0" y2="1"><stop offset="0" stop-color="#3f83ea"/><stop offset=".4" stop-color="#2360f0"/><stop offset="1" stop-color="#1c4bc9"/></linearGradient></defs><rect width="104" height="104" rx="24" fill="url(#zm)"/><text class="zoom-logo" x="52" y="60">zoom</text></svg></span>
  <i class="divider"></i>
  <span><svg viewBox="0 0 104 104"><path fill="#e6e6e6" d="M18-10h67v50H18z"/><path fill="#555" d="M18-10h6v9h-6z"/><path fill="#f8f8f8" d="M18-.500h40V40H18z"/><path fill="#3f4346" d="M46 0h12l-2 10 2 12H48l2-10z"/><path fill="#fafafa" d="M62-8l22 24v12L62 10z"/><path d="M71-6h6M71-1h6" stroke="#aaa"/><path fill="#e2a877" d="M4.300 25.300l9-2V41zM72.700 12.700L106 31 92 46l-2-20z"/><path fill="#f0d25c" d="M13.300 23.300L58.700 9.300 90 26v17L43.700 64.300 13.300 41z"/><path fill="#ddbb47" d="M13.300 41l45.400-16L90 43 43.700 64.300z"/><path fill="#f3d85f" opacity=".55" d="M13.300 23.300L58.700 9.300 90 26 43.700 44.300z"/><path d="M13.300 23.300l30.400 21L90 26M43.700 44.300v20" stroke="#f9e68c" stroke-width="1.500" fill="none"/><path fill="#8b5a2d" d="M12 41l31.700 23.300v44L12 83.300z"/><path fill="#7a4c22" d="M43.700 64.300L92 46v42.700l-48.300 19.600z"/><path fill="#cf935f" d="M12 39.300l31.700 25-19.400 10L-5 49.300z"/><path fill="#c98d59" d="M43.700 64.300l48.300-19 11 19.400L58.700 84z"/></svg></span>
  <span><svg viewBox="0 0 104 104"><defs><linearGradient id="tr" x1="0" y1="0" x2="1" y2="0"><stop offset="0" stop-color="#cfcfd0"/><stop offset=".3" stop-color="#e6e6e6"/><stop offset=".7" stop-color="#dcdcdd"/><stop offset="1" stop-color="#cbc2c2"/></linearGradient></defs><ellipse cx="52" cy="7.500" rx="45.500" ry="12" fill="#c2a5a2"/><path fill="#dcdcdc" d="M14 4l24-13 10 6 6 8 10-11 14 8 12 4-2 14-34 4-30-4z"/><path fill="#8d8d8d" d="M14-2l8 8-2 6-6-4zM78 0l9 4-2 10-9-4z"/><path fill="#444" d="M28 8l14 6-8 6-8-4zM56 6l6-8 4 4-6 14z"/><path fill="#4fb3dc" d="M36 4l10-2 2 4-7 2z"/><path fill="#73b84c" d="M50 4l4 2-4 10z"/><path fill="#3c5ea8" d="M62 2l10 4-4 6-8-3z"/><path fill="#c2613a" d="M58 10l8 1-4 5z"/><path fill="url(#tr)" d="M6.700 7.500L17 94q1 15 20 15h30q19 0 20.300-15l10-86.500c-4 15-86.600 15-90.600 0z"/><path fill="#f3f3f3" opacity=".8" d="M18 94q14 6 34 6t34-6q-1 15-20 15H38q-19 0-20-15zM42 34c14 4 26-2 36-12-2 14-20 20-36 12z"/><path fill="none" stroke="#eee" stroke-width="1.500" d="M6.700 7.500c5 15 85 15 90.600 0"/></svg></span>
</footer>
</body>
</html>
```
FILE: styles.css
```css
* { box-sizing: border-box; }
body {
  margin: 0; width: 3584px; height: 2240px; overflow: hidden;
  display: flex; flex-direction: column;
  font-family: Inter, "Liberation Sans", sans-serif;
  background:
    linear-gradient(180deg, rgba(0,0,0,1) 2070px, rgba(0,0,0,.55) 2120px, rgba(0,0,0,0) 2180px),
    linear-gradient(90deg, #04121f 0, #04101d 735px, #2c0620 745px, #3c1234 1200px, #43131c 1220px, #3f1a14 1560px, #3a0620 1580px, #2a0315 1900px, #451030 2300px, #4a1640 2520px, #300a20 2530px, #4a0f2c 2650px, #501c1c 3100px, #7c2316 3400px, #822715 3584px);
}
.sprite { position: absolute; width: 0; height: 0; }
svg { display: block; overflow: visible; }

/* system menu bar */
.menubar {
  flex: none; height: 48px; display: flex; align-items: center; justify-content: space-between;
  color: #f1efee; font-size: 25.6px; font-weight: 500; line-height: 46px;
  background: linear-gradient(90deg, #36302f 0, #4a3a2d 400px, #7a4427 800px, #8f4521 1150px, #97431e 1500px, #963a1e 1900px, #8a3220 2150px, #77291f 2400px, #5e2422 2750px, #46222a 3050px, #33202a 3350px, #2a1f2b 3584px);
  text-shadow: 0 2px 4px rgba(0,0,0,.25);
}
.apple { width: 33px; height: 33px; margin: -2px 0 0 36px; }
.menus { flex: 1; display: grid; margin: -1px 0 0 37px; grid-template-columns: 142px 84px 88px 100px 128px 175px 132px 84px 137px auto; white-space: nowrap; }
.app-name { font-weight: 700; letter-spacing: .4px; margin-left: -1px; }
.status { display: grid; align-items: center; height: 48px; grid-template-columns: 116px 70px 70px 71px 67px 70px 70px 68px 88px 68px 68px 64px 64px 282px; white-space: nowrap; }
.status svg { width: 36px; height: 36px; }
.status .battery { width: 52px; }
.zoom-word { font-size: 30px; font-weight: 500; letter-spacing: .9px; margin: -2px 0 0 -3px; }
.st-q { font: 700 17px Inter, sans-serif; fill: #fff; text-anchor: middle; }
.siri { width: 28px; height: 28px; border-radius: 50%; margin-left: 4px; background: radial-gradient(circle at 55% 55%, #fff 0 8%, #b7cdf5 22%, transparent 45%), conic-gradient(#3f9c7c, #2e5f8a, #3f7fd6, #7a4f9a, #d6417e, #9b3a74, #3f9c7c); }
.clock { letter-spacing: .8px; margin-top: -2px; }

/* browser window */
.window { flex: none; margin-top: 2px; height: 2020px; border-radius: 20px; overflow: hidden; background: #d7e3fb; display: flex; flex-direction: column; box-shadow: inset 0 3px 0 #eef3fd; }
.tabstrip { flex: none; height: 80px; display: flex; align-items: center; }
.lights { display: flex; gap: 16px; padding: 2px 0 0 42px; width: 180px; }
.lights i { width: 24px; height: 24px; border-radius: 50%; border: 1px solid rgba(0,0,0,.12); }
.close { background: #ed6a5e; } .min { background: #f4bf4f; } .max { background: #61c554; }
.tabs { flex: 1; display: flex; align-items: center; height: 80px; }
.tab { flex: none; width: 70px; height: 32px; padding-left: 18px; display: flex; border-right: 4px solid #b0cbf9; }
.tab.narrow { width: 68px; padding-left: 16px; }
.tab.last { border-color: transparent; }
.tab svg, .bookmarks svg { flex: none; width: 32px; height: 32px; }
.globe { color: #5f6368; fill: #dfe6f4; }
.globe.pale { color: #838383; }
.globe.on-white { fill: #fff; }
.globe-land { fill: inherit; }
.fav-h { font: 400 25px "Noto Sans", sans-serif; text-anchor: middle; }
.fav-bold { font-weight: 700; }
.fav-r { font: 600 22px Inter, sans-serif; text-anchor: middle; }
.tab-active { position: relative; flex: none; align-self: flex-end; width: 64px; height: 68px; margin-left: 4px; background: #fff; border-radius: 20px 20px 0 0; display: flex; justify-content: center; padding-top: 20px; }
.tab-active::before, .tab-active::after { content: ""; position: absolute; bottom: 0; width: 24px; height: 24px; }
.tab-active::before { right: 100%; background: radial-gradient(circle at 0 0, transparent 23.5px, #fff 24px); }
.tab-active::after { left: 100%; background: radial-gradient(circle at 100% 0, transparent 23.5px, #fff 24px); }
.tab-active svg { width: 16px; height: 16px; }
.new-tab { width: 20px; height: 20px; margin-left: 30px; }
.tab-search { width: 56px; height: 56px; margin-left: auto; margin-right: 12px; border-radius: 20px; background: #ecf3fc; display: grid; place-items: center; }
.tab-search svg { width: 16px; height: 10px; }

.chrome-body { flex: 1; display: flex; flex-direction: column; background: #fff; border-radius: 20px 20px 0 0; }
.toolbar { flex: none; height: 92px; display: flex; align-items: center; }
.nav-icons { display: grid; grid-template-columns: 71px 72px 72px 72px; padding-left: 26px; width: 312px; }
.nav-icons svg { width: 36px; height: 36px; fill: #454746; }
.nav-icons .dim { fill: #a8a9a9; }
.flip { transform: scaleX(-1); }
.nav-icons .line { fill: none; stroke: #454746; stroke-width: 2.2; }
.omnibox { width: 2636px; height: 68px; border-radius: 34px; background: #ebeff7; display: flex; align-items: center; padding-left: 10px; }
.site-info { width: 48px; height: 48px; border-radius: 50%; background: #fff; display: grid; place-items: center; }
.site-info svg { width: 28px; height: 28px; }
.url { margin-left: 16px; font-size: 27px; letter-spacing: .5px; color: #1f1f1f; }
.url em { font-style: normal; color: #4a4c4e; }
.fav-star { width: 39px; height: 39px; margin-left: auto; margin-right: 29px; }
.extensions { display: grid; align-items: center; grid-template-columns: 72px 72px 72px 71px 69px 42px 68px 88px auto; margin-left: 36px; }
.extensions > svg, .ext svg { width: 32px; height: 32px; }
.ext { position: relative; }
.ext b { position: absolute; left: 14px; top: 14px; width: 32px; height: 32px; border: 2px solid #fff; border-radius: 9px; font-size: 20px; line-height: 28px; text-align: center; font-weight: 600; color: #1f1f1f; }
.green { background: #5cc43a; } .blue { background: #5083ec; }
.extensions .puzzle { width: 36px; height: 36px; margin-top: -3px; }
.rule { width: 4px; height: 32px; border-radius: 2px; background: #d3e3fd; }
.extensions .side { width: 30px; height: 30px; }
.extensions .avatar { width: 40px; height: 40px; }
.kebab, .extensions .kebab { width: 8px; height: 32px; color: #454746; }

.bookmarks { flex: none; height: 68px; padding: 0 0 13px 27px; display: grid; align-items: center; white-space: nowrap; color: #454746; font-size: 23.6px; grid-template-columns: 321px 213px 308px 223px 156px 183px 204px 199px 315px 165px 216px 175px 550px 55px 36px auto; }
.bookmarks span { display: flex; align-items: center; gap: 12px; }
.bookmarks .f { width: 34px; margin-right: 3px; }
.bookmarks span:first-child { letter-spacing: -.08px; }
.bookmarks span:first-child svg { width: 40px; height: 36px; margin: 4px -2px 0 0; }
.bookmarks .g { width: 24px; height: 24px; margin: 0 4px 0 2px; }
.swaram svg { margin-right: 2px; }
.bookmarks .more svg { width: 22px; height: 20px; }
.sw { font: 700 7px "Liberation Sans", sans-serif; }

/* app */
.page { flex: 1; display: flex; flex-direction: column; border-top: 2px solid #dfe1e3; font-family: "Noto Sans CJK SC", "Noto Sans", sans-serif; color: #31333f; background: #fff; }
.decoration { height: 4px; background: linear-gradient(90deg, #ee5653, #fffd80); }
.app-bar { height: 90px; display: flex; align-items: center; justify-content: flex-end; padding-right: 40px; font-size: 25.2px; line-height: 40px; }
.app-bar span { margin-right: 52px; margin-top: -4px; }
.app-bar .kebab { color: #31333f; width: 8px; height: 28px; }
main { width: 1408px; margin: 140px 0 0 1088px; display: flex; flex-direction: column; align-items: flex-start; }
h1 { margin: 0; font-size: 79.2px; line-height: 96px; font-weight: 700; letter-spacing: -.2px; white-space: nowrap; }
.st-tabs { align-self: stretch; margin-top: 38px; height: 86px; display: flex; gap: 32px; font-size: 25.2px; letter-spacing: -.08px; line-height: 80px; box-shadow: inset 0 -4px 0 #e9e9ea; }
.st-tabs span { height: 86px; }
.st-tabs .selected { color: #ee5653; box-shadow: inset 0 -4px 0 #ee5653; }
h2 { margin: 64px 0 0; font-size: 64.8px; line-height: 80px; font-weight: 600; letter-spacing: -1.5px; white-space: nowrap; }
label { margin-top: 41px; font-size: 25.2px; letter-spacing: -.08px; line-height: 40px; }
input { margin-top: 13px; width: 1408px; height: 81px; border: 0; border-radius: 16px; background: #f0f2f6; }
button { margin-top: 32px; height: 77px; width: 143px; padding: 0 0 5px; border: 2px solid #d6d6d9; border-radius: 16px; background: #fff; color: #31333f; font: 400 28.8px "Noto Sans CJK SC", "Noto Sans", sans-serif; }

/* dock */
.dock {
  position: absolute; left: 229px; top: 2072px; width: 3127px; height: 158px; border-radius: 46px;
  display: flex; gap: 32px; padding: 20px 20px 0 19px;
  border: 2px solid rgba(255,255,255,.22);
  background: linear-gradient(180deg, rgba(80,80,80,.25), rgba(80,80,80,0)), linear-gradient(90deg, #5e6470 0, #60636f 380px, #7b5a69 560px, #925a76 850px, #9a5c60 1200px, #9f5a64 1350px, #94576c 1500px, #8c5768 1800px, #965a7e 2150px, #965a80 2400px, #a25a70 2650px, #b46058 2950px, #c06454 3127px);
  box-shadow: 0 0 90px rgba(0,0,0,.26), 0 0 0 1px rgba(0,0,0,.3);
}
.dock span { position: relative; flex: none; width: 104px; height: 104px; }
.dock span > svg { width: 104px; height: 104px; filter: drop-shadow(0 2px 2px rgba(0,0,0,.3)); }
.run::after { content: ""; position: absolute; left: 48px; top: 124px; width: 8px; height: 8px; border-radius: 50%; background: #0a0208; }
.badge { position: absolute; left: 71px; top: -11px; width: 48px; height: 48px; border-radius: 50%; background: #e64d40; color: #fff; font-size: 26px; font-weight: 400; line-height: 48px; text-align: center; box-shadow: 0 1px 3px rgba(0,0,0,.4); }
.divider { flex: none; width: 30px; height: 118px; margin-top: -2px; background: linear-gradient(90deg, transparent 16px, #5a2a44 16px 18px, transparent 18px); }
.petals rect { mix-blend-mode: multiply; }
.zoom-logo { font: 600 28px Inter, sans-serif; letter-spacing: -.2px; fill: #fff; text-anchor: middle; }
```
